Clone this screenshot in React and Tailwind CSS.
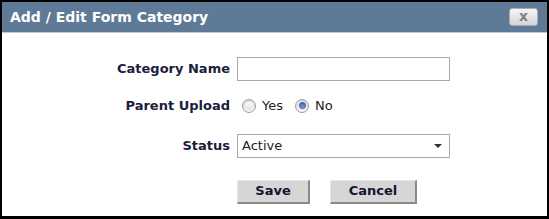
import React, { useState } from 'react';

function Radio({ checked, onClick, label }) {
  return (
    <label onClick={onClick} className="flex items-center cursor-pointer">
      <span className="w-[14px] h-[14px] rounded-full border border-[#9c9c9c] bg-gradient-to-b from-[#d9d9d9] to-[#f7f7f7] flex items-center justify-center mr-[6px]">
        {checked ? (
          <span className="w-[7px] h-[7px] rounded-full bg-gradient-to-b from-[#3d62b8] to-[#8aa8e6] border border-[#2c4d99]"></span>
        ) : (
          <span className="w-[8px] h-[8px] rounded-full bg-gradient-to-b from-[#fdfdfd] to-[#e3e3e3]"></span>
        )}
      </span>
      {label}
    </label>
  );
}

function App() {
  const [name, setName] = useState('');
  const [parent, setParent] = useState('no');
  const [status, setStatus] = useState('Active');

  return (
    <div className="w-[549px] h-[219px] bg-black pl-[2px] pr-[2px] pt-[2px] pb-[3px]" style={{ fontFamily: 'Verdana, "DejaVu Sans", sans-serif' }}>
      <div className="h-full bg-white flex flex-col">
        {/* Title bar */}
        <div className="h-[31px] bg-[#5e7a97] border-b border-[#c8c8c8] flex items-center justify-between pl-[8px] pr-[9px] shrink-0">
          <h2 className="text-[14px] font-bold text-white">Add / Edit Form Category</h2>
          <button className="w-[29px] h-[18px] rounded-[3px] bg-gradient-to-b from-[#f6f6f6] to-[#d4d4d4] border border-[#a3aeb9] flex items-center justify-center text-[#808080] text-[14px] font-bold leading-none pb-[2px]">
            x
          </button>
        </div>

        {/* Form */}
        <div className="flex-1 pt-[24px]">
          <div className="grid grid-cols-[228px_1fr] gap-x-[7px] items-center text-[13px]">
            <label className="text-right font-bold text-[#1c1c3c]">Category Name</label>
            <input
              value={name}
              onChange={e => setName(e.target.value)}
              className="w-[213px] h-[24px] border border-[#a9a9a9] px-1 text-[13px] outline-none"
            />

            <label className="text-right font-bold text-[#1c1c3c] mt-[15px]">Parent Upload</label>
            <div className="flex items-center mt-[15px] text-[13px] text-[#222] pl-[5px] gap-[12px]">
              <Radio checked={parent === 'yes'} onClick={() => setParent('yes')} label="Yes" />
              <Radio checked={parent === 'no'} onClick={() => setParent('no')} label="No" />
            </div>

            <label className="text-right font-bold text-[#1c1c3c] mt-[18px]">Status</label>
            <div className="relative w-[213px] mt-[18px]">
              <select
                value={status}
                onChange={e => setStatus(e.target.value)}
                className="appearance-none w-full h-[24px] border border-[#a9a9a9] pl-[4px] text-[13px] text-[#222] bg-white outline-none"
              >
                <option>Active</option>
                <option>Inactive</option>
              </select>
              <span className="pointer-events-none absolute right-[8px] top-[10px] w-0 h-0 border-l-[4px] border-r-[4px] border-t-[4px] border-l-transparent border-r-transparent border-t-[#333]"></span>
            </div>

            <div></div>
            <div className="flex gap-[20px] mt-[22px]">
              <button className="w-[73px] h-[24px] bg-[#d6d6d6] border-r-2 border-b-2 border-[#8a8a8a] border-t border-l border-t-[#e8e8e8] border-l-[#e8e8e8] font-bold text-[13px] text-[#14142e]">Save</button>
              <button className="w-[87px] h-[24px] bg-[#d6d6d6] border-r-2 border-b-2 border-[#8a8a8a] border-t border-l border-t-[#e8e8e8] border-l-[#e8e8e8] font-bold text-[13px] text-[#14142e]">Cancel</button>
            </div>
          </div>
        </div>
      </div>
    </div>
  );
}

export default App;
